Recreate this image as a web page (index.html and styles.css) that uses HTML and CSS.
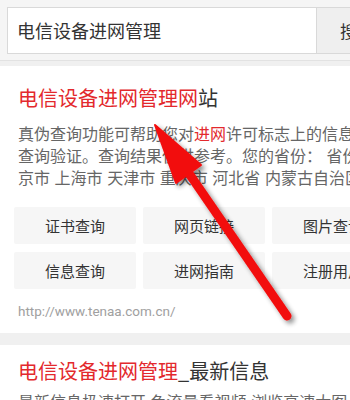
FILE: index.html
```html
<!DOCTYPE html>
<html lang="zh-CN">
<head>
<meta charset="utf-8">
<link rel="stylesheet" href="styles.css">
</head>
<body>
<div class="page">
  <header class="search-bar">
    <div class="search-input">电信设备进网管理</div>
    <div class="search-btn">搜</div>
  </header>
  <section class="card card-first">
    <h2 class="title"><span class="hl">电信设备进网管理网</span>站</h2>
    <div class="desc">
      <div class="line">真伪查询功能可帮助您对<span class="hl">进网</span>许可标志上的信息进行</div>
      <div class="line">查询验证。查询结果仅供参考。您的省份： 省份</div>
      <div class="line">京市 上海市 天津市 重庆市 河北省 内蒙古自治区</div>
    </div>
    <div class="links">
      <div class="link">证书查询</div>
      <div class="link">网页链接</div>
      <div class="link">图片查询</div>
      <div class="link">信息查询</div>
      <div class="link">进网指南</div>
      <div class="link">注册用户</div>
    </div>
    <div class="url">http://www.tenaa.com.cn/</div>
  </section>
  <section class="card card-second">
    <h2 class="title"><span class="hl">电信设备进网管理</span>_最新信息</h2>
    <div class="desc">
      <div class="line">最新信息极速打开 免流量看视频 浏览高速大图 极速</div>
    </div>
  </section>
</div>
<svg class="arrow" width="350" height="400" viewBox="0 0 350 400">
  <defs>
    <filter id="sh" x="-20%" y="-20%" width="140%" height="140%">
      <feGaussianBlur in="SourceAlpha" stdDeviation="2.5"/>
      <feOffset dx="3" dy="3" result="b"/>
      <feComponentTransfer><feFuncA type="linear" slope="0.45"/></feComponentTransfer>
      <feMerge><feMergeNode/><feMergeNode in="SourceGraphic"/></feMerge>
    </filter>
  </defs>
  <g filter="url(#sh)">
    <line x1="188" y1="172" x2="287" y2="316" stroke="#f20d0d" stroke-width="9" stroke-linecap="round"/>
    <polygon points="155,125 201,165 176,183" fill="#f20d0d" stroke="#f20d0d" stroke-width="2" stroke-linejoin="round"/>
  </g>
</svg>
</body>
</html>
```

FILE: styles.css
```css
* { box-sizing: border-box; margin: 0; padding: 0; }
html, body {
  width: 350px;
  height: 400px;
  overflow: hidden;
  background: #f0f0f0;
  font-family: "Noto Sans CJK SC", "Noto Sans", sans-serif;
}
.page { width: 420px; }
.search-bar {
  display: flex;
  padding: 7px 0 6px 7px;
  background: #f5f5f5;
  border-bottom: 1px solid #e2e2e2;
  height: 61px;
}
.search-input {
  width: 309px;
  height: 47px;
  background: #fff;
  border: 1px solid #d9d9d9;
  border-right: none;
  font-size: 18px;
  line-height: 45px;
  padding-left: 9px;
  color: #333;
}
.search-btn {
  width: 80px;
  height: 47px;
  background: #efefef;
  border: 1px solid #d9d9d9;
  font-size: 17px;
  line-height: 45px;
  padding-left: 23px;
  color: #333;
}
.card {
  background: #fff;
  padding: 0 0 0 18px;
}
.card-first { margin-top: 5px; padding-top: 20px; padding-bottom: 13px; }
.card-second { margin-top: 12px; padding-top: 14px; }
.title {
  font-size: 20px;
  font-weight: normal;
  line-height: 24px;
  color: #333;
  white-space: nowrap;
}
.hl { color: #e3292d; }
.desc { margin-top: 12px; }
.card-second .desc { margin-top: 7px; }
.line {
  font-size: 16px;
  line-height: 22px;
  color: #666;
  white-space: nowrap;
  word-spacing: 1px;
}
.links {
  display: grid;
  grid-template-columns: repeat(3, 122px);
  column-gap: 7px;
  row-gap: 8px;
  margin: 19px 0 0 -4px;
}
.link {
  height: 37px;
  background: #f6f6f6;
  border-radius: 2px;
  font-size: 15px;
  line-height: 37px;
  text-align: center;
  color: #333;
}
.url {
  margin-top: 13px;
  font-family: Roboto, "Noto Sans", sans-serif;
  font-size: 13.5px;
  line-height: 18px;
  color: #a0a0a0;
}
.arrow {
  position: absolute;
  left: 0;
  top: 0;
  pointer-events: none;
}
```
